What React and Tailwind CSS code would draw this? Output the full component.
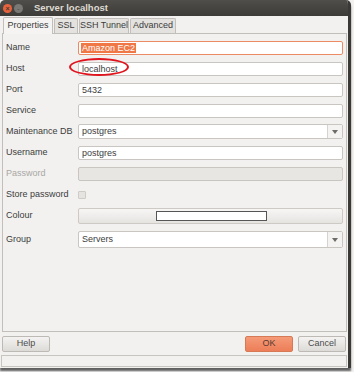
import React from 'react';

const font = { fontFamily: '"Liberation Sans", "Noto Sans", sans-serif' };

function Row({ label, dim, children, extra = '' }) {
  return (
    <div className={`flex h-[21px] items-center ${extra}`}>
      <div className={`w-[75px] shrink-0 whitespace-nowrap pl-[3px] text-[9px] ${dim ? 'text-[#a9a7a3]' : 'text-[#3c3c3c]'}`}>{label}</div>
      <div className="flex-1 pr-[3px]">{children}</div>
    </div>
  );
}

function TextBox({ value, disabled }) {
  return (
    <div className={`h-[14px] rounded-[2px] border border-[#c9c6c1] pl-[3px] text-[9px] leading-[12px] text-[#3c3c3c] ${disabled ? 'bg-[#e8e6e3]' : 'bg-white'}`}>
      {value}
    </div>
  );
}

function Combo({ value, h = 'h-[15px]' }) {
  return (
    <div className={`flex ${h} items-stretch rounded-[2px] border border-[#c9c6c1] bg-white text-[9px] text-[#3c3c3c]`}>
      <div className="flex flex-1 items-center pl-[3px]">{value}</div>
      <div className="flex w-[15px] items-center justify-center border-l border-[#d6d3cf] bg-[#f4f3f1]">
        <svg width="6" height="4" viewBox="0 0 6 4"><path d="M0 0h6L3 4z" fill="#6e6c68" /></svg>
      </div>
    </div>
  );
}

export default function App() {
  return (
    <div className="h-[372px] w-[354px] bg-[#f2f1f0] p-0" style={font}>
      <div className="relative h-[368px] w-[351px] overflow-hidden rounded-t-[5px] border-r-[3px] border-[#3a3935] bg-[#f2f1f0] shadow-[0_3px_2px_rgba(0,0,0,0.6)]">
        {/* title bar */}
        <div className="flex h-[16px] items-center bg-gradient-to-b from-[#4f4e4a] to-[#3c3b37] pl-[3px]">
          <div className="h-[9px] w-[9px] rounded-full bg-[#e8623c] text-center text-[7px] font-bold leading-[9px] text-[#3c3b37]">×</div>
          <div className="ml-[2px] h-[9px] w-[9px] rounded-full bg-[#7a7874] text-center text-[7px] leading-[9px] text-[#4a4945]">-</div>
          <div className="ml-[11px] whitespace-nowrap text-[9.5px] font-bold text-[#dfdbd2]">Server localhost</div>
        </div>

        {/* tabs */}
        <div className="flex h-[17px] items-end whitespace-nowrap pl-[3px] text-[9px] text-[#3c3c3c]">
          <div className="relative z-10 -mb-px flex h-[17px] w-[50px] items-center justify-center rounded-t-[2px] border border-b-0 border-[#c2bfba] bg-[#f5f4f3]">Properties</div>
          <div className="ml-[1px] flex h-[15px] w-[24px] items-center justify-center rounded-t-[2px] border border-b-0 border-[#c2bfba] bg-[#e4e2de]">SSL</div>
          <div className="ml-[1px] flex h-[15px] w-[50px] items-center justify-center rounded-t-[2px] border border-b-0 border-[#c2bfba] bg-[#e4e2de]">SSH Tunnel</div>
          <div className="ml-[1px] flex h-[15px] w-[46px] items-center justify-center rounded-t-[2px] border border-b-0 border-[#c2bfba] bg-[#e4e2de]">Advanced</div>
        </div>

        {/* panel */}
        <div className="ml-[2px] mr-[1px] h-[299px] border border-[#c2bfba] bg-[#f2f1f0] pt-[3px]">
          <Row label="Name">
            <div className="h-[14px] rounded-[2px] border border-[#ec8a63] bg-white pl-[2px] text-[9px] leading-[12px]">
              <span className="bg-[#f07746] px-[1px] text-white">Amazon EC2</span>
            </div>
          </Row>
          <Row label="Host">
            <div className="relative">
              <TextBox value="localhost" />
              <div className="absolute left-[-9px] top-[-4px] h-[18px] w-[60px] rounded-[50%] border-2 border-[#e0141e]" />
            </div>
          </Row>
          <Row label="Port"><TextBox value="5432" /></Row>
          <Row label="Service"><TextBox value="" /></Row>
          <Row label="Maintenance DB"><Combo value="postgres" /></Row>
          <Row label="Username"><TextBox value="postgres" /></Row>
          <Row label="Password" dim><TextBox value="" disabled /></Row>
          <Row label="Store password">
            <div className="h-[8px] w-[8px] rounded-[1px] border border-[#cfccc8] bg-[#e6e4e1]" />
          </Row>
          <Row label="Colour">
            <div className="flex h-[16px] items-center rounded-[2px] border border-[#cdcac5] bg-gradient-to-b from-[#f7f6f5] to-[#e6e4e1]">
              <div className="ml-[77px] h-[10px] w-[111px] border border-[#555] bg-white" />
            </div>
          </Row>
          <Row label="Group" extra="mt-[3px]"><Combo value="Servers" h="h-[17px]" /></Row>
        </div>

        {/* buttons */}
        <div className="mt-[4px] flex h-[16px] px-[2px] text-[9px] text-[#4c4c4c]">
          <div className="flex w-[48px] items-center justify-center rounded-[2px] border border-[#bdbab5] bg-gradient-to-b from-[#f4f3f2] to-[#dddbd7]">Help</div>
          <div className="flex-1" />
          <div className="flex w-[48px] items-center justify-center rounded-[2px] border border-[#d67a55] bg-gradient-to-b from-[#f59a77] to-[#ec7e58] text-[#5a3a2e]">OK</div>
          <div className="ml-[5px] flex w-[48px] items-center justify-center rounded-[2px] border border-[#bdbab5] bg-gradient-to-b from-[#f4f3f2] to-[#dddbd7]">Cancel</div>
        </div>

        {/* status bar */}
        <div className="mx-[1px] mt-[3px] h-[12px] border border-[#c8c5c0] bg-[#f2f1f0]" />
      </div>
    </div>
  );
}
